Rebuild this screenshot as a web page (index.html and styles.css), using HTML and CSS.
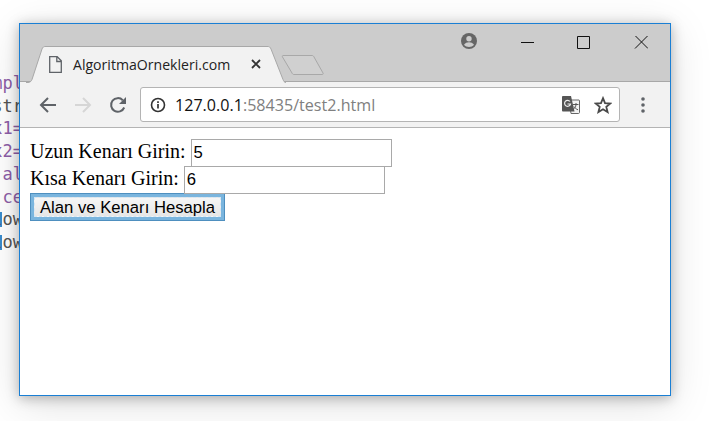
FILE: index.html
```html
<!DOCTYPE html>
<html lang="en">

<head>
    <meta charset="UTF-8">
    <title>AlgoritmaOrnekleri.com</title>
    <link rel="stylesheet" href="styles.css">
</head>

<body>
    <!-- Editor left behind the browser window -->
    <div class="code">
        <div class="code-line purple">mpl</div>
        <div class="code-line dark">str</div>
        <div class="code-line purple">x1=</div>
        <div class="code-line purple">x2=</div>
        <div class="code-line purple">al</div>
        <div class="code-line purple">ce</div>
        <div class="code-line dark mark">low</div>
        <div class="code-line dark mark">low</div>
    </div>

    <!-- Browser window -->
    <div class="window">
        <div class="titlebar">
            <div class="tab">
                <svg class="tab-shape" width="260" height="37" viewBox="0 0 260 37">
                    <path d="M0 36.500h2c2 0 3-1 4-3L16 3c.7-2 2-2.500 3-2.500h223c1 0 2.300.5 3 2.500l12 30.500c.5 1 1 3 3 3" fill="#f2f2f2" stroke="#a8a8a8" />
                </svg>
                <svg class="tab-icon" width="13" height="17" viewBox="0 0 13 17">
                    <path d="M.7.700h7.500l4.100 4.100v11.500H.7zM7.800.700v4.800h4.500" fill="none" stroke="#5f6368" stroke-width="1.300" />
                </svg>
                <span class="tab-title">AlgoritmaOrnekleri.com</span>
                <svg class="tab-close" width="10" height="10" viewBox="0 0 10 10">
                    <path d="M1 1l8 8M9 1l-8 8" stroke="#333" stroke-width="1.800" />
                </svg>
            </div>
            <svg class="new-tab" width="44" height="22" viewBox="0 0 44 22">
                <path d="M2 1.500h29c1 0 1.500.5 2 1.500l9 16c.5 1 0 1.500-1 1.500H13c-1 0-1.500-.5-2-1.500L1.500 3c-.5-1 0-1.500.5-1.500z" fill="#d0d0d0" stroke="#a8a8a8" />
            </svg>
            <svg class="profile" width="18" height="18" viewBox="0 0 18 18">
                <circle cx="9" cy="9" r="8" fill="#666" />
                <circle cx="9" cy="6.800" r="2.700" fill="#ccc" />
                <path d="M4 12.800c1-1.900 3.100-2.600 5-2.600s4 .7 5 2.600c-1.200 1.400-3.100 2.200-5 2.200s-3.800-.8-5-2.200z" fill="#ccc" />
            </svg>
            <div class="controls">
                <svg class="control" width="14" height="14" viewBox="0 0 14 14"><path d="M1 6.500h13" stroke="#111" /></svg>
                <svg class="control" width="14" height="14" viewBox="0 0 14 14"><path d="M.5.500h12v12H.5z" fill="none" stroke="#111" /></svg>
                <svg class="control" width="14" height="14" viewBox="0 0 14 14"><path d="M1-.5l13 13M14-.5l-13 13" stroke="#111" /></svg>
            </div>
        </div>

        <div class="toolbar">
            <svg class="nav-btn" width="18" height="18" viewBox="0 0 18 18">
                <path d="M17 9H2.500M9 2L2 9l7 7" fill="none" stroke="#5f6368" stroke-width="2" />
            </svg>
            <svg class="nav-btn" width="18" height="18" viewBox="0 0 18 18">
                <path d="M1 9h14.500M9 2l7 7-7 7" fill="none" stroke="#d6d6d6" stroke-width="2" />
            </svg>
            <svg class="nav-btn" width="18" height="18" viewBox="0 0 18 18">
                <path d="M15.200 11.500A6.800 6.800 0 1 1 13.800 4.200" fill="none" stroke="#5f6368" stroke-width="2" />
                <path d="M17 1v7h-7z" fill="#5f6368" />
            </svg>
            <div class="omnibox">
                <svg class="info" width="16" height="16" viewBox="0 0 16 16">
                    <circle cx="8" cy="8" r="6.500" fill="none" stroke="#333" stroke-width="1.600" />
                    <path d="M8 7v4.500M8 4.300v1.600" stroke="#333" stroke-width="1.700" />
                </svg>
                <span class="url"><span class="host">127.0.0.1</span>:58435/test2.html</span>
                <svg class="translate" width="18" height="18" viewBox="0 0 18 18">
                    <path d="M7 4h10c.5 0 .5.5.5 1v11.500c0 .5-.5 1-1 1H9z" fill="#f2f2f2" stroke="#666" />
                    <path d="M1 0h8l3.500 15.500H1c-.5 0-1-.5-1-1V1c0-.5.5-1 1-1z" fill="#555" />
                    <path d="M8 5.500a3 3 0 1 0 .5 2.500H5.500" fill="none" stroke="#eee" stroke-width="1.200" />
                    <path d="M11 8.500h5.500M14 7v1.500c0 2.500-1.500 4-3 5M12 10.500c.8 1.500 2 2.500 4 3.300" fill="none" stroke="#555" />
                </svg>
                <svg class="star" width="18" height="18" viewBox="0 0 18 18">
                    <path d="M9 2.200l2 4.900 5.300.4-4 3.400 1.300 5.100L9 13.200 4.400 16l1.300-5.100-4-3.400 5.300-.4z" fill="none" stroke="#4a4a4a" stroke-width="1.800" />
                </svg>
            </div>
            <svg class="menu" width="4" height="16" viewBox="0 0 4 16">
                <circle cx="2" cy="2" r="1.800" fill="#5f6368" />
                <circle cx="2" cy="8" r="1.800" fill="#5f6368" />
                <circle cx="2" cy="14" r="1.800" fill="#5f6368" />
            </svg>
        </div>

        <!-- Page shown in the browser -->
        <div class="page">
            <div class="row">Uzun Kenarı Girin: <input class="field" type="text" value="5"></div>
            <div class="row">Kısa Kenarı Girin: <input class="field" type="text" value="6"></div>
            <button class="submit"><span class="submit-inner">Alan ve Kenarı Hesapla</span></button>
        </div>
    </div>
</body>

</html>
```

FILE: styles.css
```css
/* Desktop behind the window */
body {
    margin: 0;
    height: 421px;
    overflow: hidden;
    background-color: #fff;
}

/* Code editor peeking out on the left */
.code {
    position: absolute;
    left: 0;
    top: 72px;
    width: 23px;
    overflow: hidden;
    font-family: "DejaVu Sans Mono", monospace;
    font-size: 17px;
    line-height: 22.700px;
}

.code-line {
    display: flex;
    justify-content: flex-end;
    white-space: nowrap;
}

.purple {
    color: #8e5ea8;
}

.dark {
    color: #555;
}

.mark {
    background: linear-gradient(#3a8ccc, #3a8ccc) no-repeat 0 4px / 2px 15px;
}

/* Window frame */
.window {
    position: absolute;
    left: 19px;
    top: 23px;
    width: 650px;
    height: 371px;
    border: 1px solid #1a7fd4;
    background-color: #fff;
    display: flex;
    flex-direction: column;
    box-shadow: 0 2px 12px rgba(0, 0, 0, 0.28), 0 8px 40px rgba(0, 0, 0, 0.13);
}

/* Title bar with tabs */
.titlebar {
    height: 57px;
    flex-shrink: 0;
    background-color: #ccc;
    border-bottom: 1px solid #a8a8a8;
    display: flex;
    align-items: flex-end;
    position: relative;
}

.tab {
    position: relative;
    width: 260px;
    height: 36px;
    margin-left: 6px;
    margin-bottom: -1px;
    display: flex;
    align-items: center;
}

.tab-shape {
    position: absolute;
    left: 0;
    top: 0;
}

.tab-icon {
    position: relative;
    margin-left: 23px;
}

.tab-title {
    position: relative;
    margin-left: 11px;
    width: 164px;
    font-family: "Open Sans", sans-serif;
    font-size: 14.100px;
    color: #222;
    white-space: nowrap;
}

.tab-close {
    position: relative;
    margin-left: 14px;
}

.new-tab {
    margin-left: -5px;
    margin-bottom: 5px;
}

.profile {
    position: absolute;
    left: 440px;
    top: 8px;
}

.controls {
    position: absolute;
    right: 22px;
    top: 12px;
    display: flex;
    gap: 43px;
}

/* Address bar row */
.toolbar {
    height: 45px;
    flex-shrink: 0;
    background-color: #f2f2f2;
    border-bottom: 1px solid #b4b4b4;
    display: flex;
    align-items: center;
    padding-left: 19px;
}

.nav-btn {
    margin-right: 17px;
}

.omnibox {
    width: 480px;
    height: 35px;
    margin-left: -4px;
    box-sizing: border-box;
    background-color: #fff;
    border: 1px solid #b4b4b4;
    border-radius: 3px;
    display: flex;
    align-items: center;
    padding-left: 9px;
}

.url {
    flex: 1;
    margin-left: 9px;
    font-family: "Open Sans", sans-serif;
    font-size: 16.100px;
    color: #808080;
    white-space: nowrap;
}

.host {
    color: #111;
}

.translate {
    margin-right: 14px;
}

.star {
    margin-right: 7px;
}

.menu {
    margin-left: 21px;
}

/* Page content */
.page {
    flex: 1;
    padding: 10px;
    font-family: "Liberation Serif", serif;
    font-size: 20px;
    color: #000;
}

.row {
    height: 27px;
    line-height: 26px;
}

.field {
    width: 201px;
    height: 27.500px;
    box-sizing: border-box;
    padding: 1px 2px;
    border: 1px solid #a9a9a9;
    font-family: "Liberation Sans", sans-serif;
    font-size: 16.670px;
    margin: 0;
}

.submit {
    display: block;
    width: 195px;
    height: 28px;
    margin-top: 1px;
    padding: 3px;
    box-sizing: border-box;
    border: 1px solid #4e8fbf;
    background-color: #7ab5de;
}

.submit-inner {
    display: block;
    height: 100%;
    box-sizing: border-box;
    border: 1px dashed #d5e6f3;
    background: linear-gradient(#f6f6f6, #e6e6e6);
    font-family: "Liberation Sans", sans-serif;
    font-size: 16.670px;
    line-height: 19px;
    color: #000;
}
```
